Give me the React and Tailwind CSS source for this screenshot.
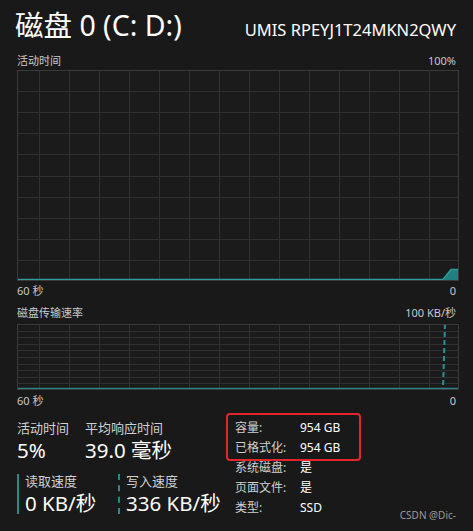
import React from 'react'

const font = "font-['Noto_Sans','Noto_Sans_CJK_SC',sans-serif]"

// vertical grid lines, scrolled offset like Task Manager
const vLines = Array.from({ length: 14 }, (_, i) => 22.5 + i * 30)

function Grid({ height, rows, children }) {
  const hLines = Array.from({ length: rows - 1 }, (_, i) => Math.round(((i + 1) * height) / rows) + 0.5)
  return (
    <svg width="442" height={height} className="block">
      <rect x="0" y="0" width="442" height={height} fill="#1b1b1b" />
      {vLines.map((x) => (
        <line key={'v' + x} x1={x} y1="0" x2={x} y2={height} stroke="#303030" strokeWidth="1" />
      ))}
      {hLines.map((y) => (
        <line key={'h' + y} x1="0" y1={y} x2="442" y2={y} stroke="#303030" strokeWidth="1" />
      ))}
      {children}
      <rect x="0.5" y="0.5" width="441" height={height - 1} fill="none" stroke="#3a3a3a" strokeWidth="1" />
    </svg>
  )
}

function Row({ left, right, className = '' }) {
  return (
    <div className={`flex justify-between items-center text-[11px] text-[#c8c8c8] ${className}`}>
      <span>{left}</span>
      <span>{right}</span>
    </div>
  )
}

export default function App() {
  const props = [
    ['系统磁盘:', '是'],
    ['页面文件:', '是'],
    ['类型:', 'SSD'],
  ]

  return (
    <div className={`relative w-[473px] h-[531px] bg-[#191919] text-white overflow-hidden ${font}`}>
      <div className="px-[17px]">
        {/* header */}
        <div className="flex justify-between items-baseline h-[52px] pt-[10px]">
          <span className="text-[28.5px] leading-[30px] -ml-[2px]">磁盘 0 (C: D:)</span>
          <span className="text-[16.5px] leading-[20px]">UMIS RPEYJ1T24MKN2QWY</span>
        </div>

        <Row left="活动时间" right="100%" className="h-[18px]" />

        <Grid height={211} rows={10}>
          <polygon points="426,210 434,199 441,199 441,210" fill="#217f7f" />
          <polyline points="0,209.5 426,209.5 434,199.5 441,199.5" fill="none" stroke="#2f9a9a" strokeWidth="1.5" />
        </Grid>

        <Row left="60 秒" right="0" className="h-[21px]" />
        <Row left="磁盘传输速率" right="100 KB/秒" className="h-[22px]" />

        <Grid height={66} rows={10}>
          <line x1="0" y1="64.5" x2="442" y2="64.5" stroke="#2a8585" strokeWidth="1.5" />
          <line x1="428" y1="0" x2="426" y2="65" stroke="#2a9090" strokeWidth="2" strokeDasharray="5 3" />
        </Grid>

        <Row left="60 秒" right="0" className="h-[22px]" />

        {/* stats */}
        <div className="flex pt-[6px]">
          <div className="w-[218px]">
            <div className="flex">
              <div className="w-[68px]">
                <div className="h-[20px] leading-[20px] text-[13px] text-[#d0d0d0]">活动时间</div>
                <div className="h-[24px] leading-[24px] text-[20.5px]">5%</div>
              </div>
              <div>
                <div className="h-[20px] leading-[20px] text-[13px] text-[#d0d0d0]">平均响应时间</div>
                <div className="h-[24px] leading-[24px] text-[20.5px]">39.0 毫秒</div>
              </div>
            </div>
            <div className="flex mt-[9px]">
              <div className="w-[101px] flex">
                <div className="w-[2px] h-[40px] mt-[3px] bg-[#2a8a8a]" />
                <div className="pl-[6px]">
                  <div className="h-[20px] leading-[20px] text-[13px] text-[#d0d0d0]">读取速度</div>
                  <div className="h-[24px] leading-[24px] text-[20.5px]">0 KB/秒</div>
                </div>
              </div>
              <div className="flex">
                <div className="w-[2px] h-[40px] mt-[3px] border-l-2 border-dashed border-[#2a8a8a]" />
                <div className="pl-[6px]">
                  <div className="h-[20px] leading-[20px] text-[13px] text-[#d0d0d0]">写入速度</div>
                  <div className="h-[24px] leading-[24px] text-[20.5px]">336 KB/秒</div>
                </div>
              </div>
            </div>
          </div>

          <div className="relative text-[12px] leading-[20px]">
            <div className="flex">
              <span className="w-[65px] text-[#d0d0d0]">容量:</span>
              <span>954 GB</span>
            </div>
            <div className="flex">
              <span className="w-[65px] text-[#d0d0d0]">已格式化:</span>
              <span>954 GB</span>
            </div>
            {props.map(([k, v]) => (
              <div key={k} className="flex">
                <span className="w-[65px] text-[#d0d0d0]">{k}</span>
                <span>{v}</span>
              </div>
            ))}
            <div className="absolute left-[-9px] top-[-5px] w-[135px] h-[48px] border-2 border-[#e3262b] rounded-[4px]" />
          </div>
        </div>
      </div>

      <div className="absolute right-[17px] bottom-[8px] text-[10px] text-[#9a9a9a]">CSDN @Dic-</div>
    </div>
  )
}
